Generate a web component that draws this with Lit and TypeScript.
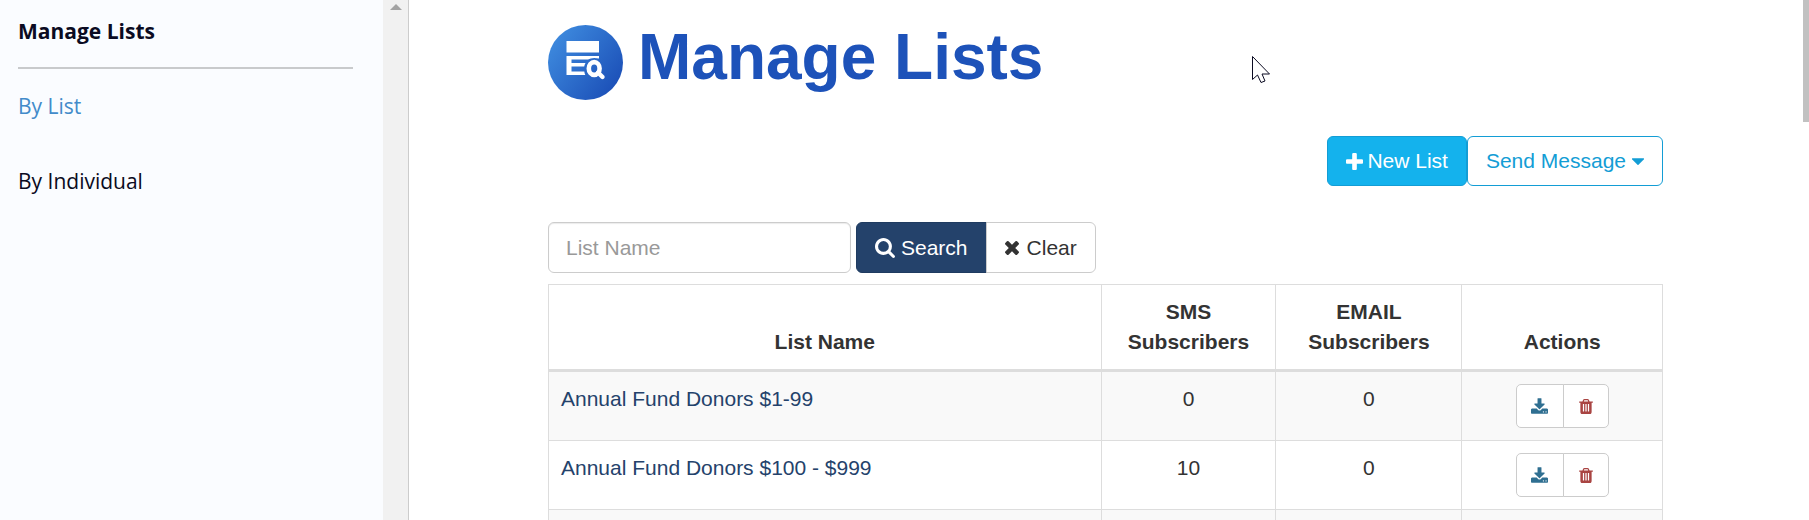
import { LitElement, html, css, svg, nothing } from "lit";
import { customElement, property } from "lit/decorators.js";

interface ListRow {
  name: string;
  sms: number;
  email: number;
}

const ROWS: ListRow[] = [
  { name: "Annual Fund Donors $1-99", sms: 0, email: 0 },
  { name: "Annual Fund Donors $100 - $999", sms: 10, email: 0 },
];

/* Glyphs on a 1792-unit grid with the y axis pointing down. */
const GLYPHS: Record<string, { box: string; d: string }> = {
  plus: {
    box: "0 0 1408 1408",
    d: "M1408 608v192q0 40-28 68t-68 28H896v416q0 40-28 68t-68 28H608q-40 0-68-28t-28-68V896H96q-40 0-68-28T0 800V608q0-40 28-68t68-28h416V96q0-40 28-68t68-28h192q40 0 68 28t28 68v416h416q40 0 68 28t28 68z",
  },
  search: {
    box: "0 0 1664 1664",
    d: "M1152 704q0-185-131.500-316.500T704 256 387.500 387.500 256 704t131.500 316.500T704 1152t316.500-131.500T1152 704zm512 832q0 52-38 90t-90 38q-54 0-90-38l-343-342q-179 124-399 124-143 0-273.500-55.500t-225-150-150-225T0 704t55.500-273.500 150-225 225-150T704 0t273.500 55.500 225 150 150 225T1408 704q0 220-124 399l343 343q37 37 37 90z",
  },
  times: {
    box: "0 0 1188 1188",
    d: "M1188 956q0 40-28 68l-136 136q-28 28-68 28t-68-28L594 866l-294 294q-28 28-68 28t-68-28L28 1024q-28-28-28-68t28-68l294-294L28 300Q0 272 0 232t28-68L164 28q28-28 68-28t68 28l294 294L888 28q28-28 68-28t68 28l136 136q28 28 28 68t-28 68L866 594l294 294q28 28 28 68z",
  },
  caret: {
    box: "0 0 1024 576",
    d: "M1024 64q0 26-19 45L557 557q-19 19-45 19t-45-19L19 109Q0 90 0 64t19-45T64 0h896q26 0 45 19t19 45z",
  },
  download: {
    box: "0 0 1664 1536",
    d: "M1280 1344q0-26-19-45t-45-19-45 19-19 45 19 45 45 19 45-19 19-45zm256 0q0-26-19-45t-45-19-45 19-19 45 19 45 45 19 45-19 19-45zm128-224v320q0 40-28 68t-68 28H96q-40 0-68-28t-28-68v-320q0-40 28-68t68-28h465l135 136q58 56 136 56t136-56l136-136h464q40 0 68 28t28 68zm-325-569q17 41-14 70l-448 448q-18 19-45 19t-45-19L339 621q-31-29-14-70 17-39 59-39h256V64q0-26 19-45t45-19h256q26 0 45 19t19 45v448h256q42 0 59 39z",
  },
  trash: {
    box: "0 0 1408 1536",
    d: "M512 1248V544q0-14-9-23t-23-9h-64q-14 0-23 9t-9 23v704q0 14 9 23t23 9h64q14 0 23-9t9-23zm256 0V544q0-14-9-23t-23-9h-64q-14 0-23 9t-9 23v704q0 14 9 23t23 9h64q14 0 23-9t9-23zm256 0V544q0-14-9-23t-23-9h-64q-14 0-23 9t-9 23v704q0 14 9 23t23 9h64q14 0 23-9t9-23zM480 256h448l-48-117q-7-9-17-11H546q-10 2-17 11zm928 32v64q0 14-9 23t-23 9h-96v948q0 83-47 143.500t-113 60.500H288q-66 0-113-58.500T128 1336V384H32q-14 0-23-9t-9-23v-64q0-14 9-23t23-9h309l70-167q15-37 54-63t79-26h320q40 0 79 26t54 63l70 167h309q14 0 23 9t9 23z",
  },
};

@customElement("glyph-icon")
export class GlyphIcon extends LitElement {
  @property() name = "";

  static styles = css`
    :host { display: inline-block; line-height: 0; }
    .glyph { display: block; width: 100%; height: 100%; fill: currentColor; }
  `;

  render() {
    const g = GLYPHS[this.name];
    if (!g) return nothing;
    return html`<svg class="glyph" viewBox=${g.box} aria-hidden="true">${svg`<path d=${g.d}></path>`}</svg>`;
  }
}

@customElement("app-root")
export class AppRoot extends LitElement {
  static styles = css`
    :host {
      display: flex;
      position: relative;
      height: 100vh;
      overflow: hidden;
      background: #fff;
      color: #333;
      font: 21px/30px "Liberation Sans", Arial, sans-serif;
    }
    *, *::before { box-sizing: border-box; }
    a { text-decoration: none; }

    .sidebar {
      flex: none;
      display: flex;
      width: 409px;
      border-right: 1px solid #ccc;
      background: #fafcff;
      font-family: "Open Sans", sans-serif;
    }
    .side-nav { flex: 1; padding: 16px 30px 0 18px; }
    .side-title {
      margin: 0 0 22px;
      padding-bottom: 21px;
      border-bottom: 2px solid #c8cacc;
      color: #0b0b22;
      font-size: 21px;
      font-weight: 700;
      line-height: 30px;
    }
    .side-list { display: grid; gap: 45px; margin: 0; padding: 0; list-style: none; }
    .side-link { color: #0b0b22; }
    .side-link.active { color: #428bca; }
    .side-scroll { width: 25px; padding-top: 4px; background: #f1f1f1; }
    .side-arrow { display: block; width: 12px; height: 6px; margin: 0 auto; fill: #a3a3a3; }

    .main { flex: 1; min-width: 0; padding: 0 140px 0 139px; }
    .page-title { display: flex; align-items: center; gap: 15px; height: 75px; margin-top: 25px; }
    .badge { flex: none; width: 75px; height: 75px; }
    h1 {
      margin: 0 0 12px;
      color: #1d52b9;
      font-size: 64px;
      line-height: 72px;
      white-space: nowrap;
    }
    .toolbar { display: flex; justify-content: flex-end; margin-top: 36px; }

    .btn {
      display: inline-flex;
      align-items: center;
      justify-content: center;
      gap: 6px;
      height: 50px;
      margin: 0;
      padding: 0 18px;
      border: 1px solid #ccc;
      border-radius: 6px;
      background: #fff;
      color: #333;
      font: inherit;
      white-space: nowrap;
    }
    .btn.info { gap: 4px; border-color: #139dd5; background: #14b2ed; color: #fff; }
    .btn.outline { border-color: #139dd5; color: #139dd5; }
    .icon-plus { width: 17px; height: 17px; }
    .icon-caret { width: 12px; height: 7px; }
    .icon-search { width: 20px; height: 20px; }
    .icon-times { width: 14px; height: 14px; }

    .filter { display: flex; margin: 36px 0 11px; }
    .field {
      width: 303px;
      height: 51px;
      margin: 0 5px 0 0;
      padding: 0 17px;
      border: 1px solid #ccc;
      border-radius: 6px;
      box-shadow: inset 0 1px 1px rgba(0, 0, 0, 0.08);
      color: #555;
      font: inherit;
    }
    .field::placeholder { color: #999; opacity: 1; }
    .filter .btn { height: 51px; }
    .btn.primary {
      border-color: #1f3b60;
      border-radius: 6px 0 0 6px;
      background: #24426b;
      color: #fff;
    }
    .btn.clear { gap: 8px; margin-left: -1px; border-radius: 0 6px 6px 0; }

    table { width: 100%; border-collapse: collapse; table-layout: fixed; }
    th, td { padding: 12px; border: 1px solid #ddd; text-align: center; vertical-align: top; }
    th { vertical-align: bottom; border-bottom: 3px solid #ddd; }
    td { height: 69px; }
    .col-name { width: 49.6%; }
    .col-sms { width: 15.7%; }
    .col-email { width: 16.7%; }
    tbody tr:nth-child(odd) { background: #f9f9f9; }
    .name { text-align: left; }
    .name a { color: #24426b; }
    .actions { padding: 12px 0; }
    .pair { display: flex; justify-content: center; }
    .pair .btn { width: 48px; height: 44px; padding: 0; border-radius: 5px 0 0 5px; color: #2f6f91; }
    .pair .btn + .btn { width: 46px; margin-left: -1px; border-radius: 0 5px 5px 0; color: #a94442; }
    .icon-download { width: 17px; height: 16px; }
    .icon-trash { width: 14px; height: 15px; }

    .page-scroll { flex: none; width: 6px; }
    .page-thumb { height: 122px; background: #c1c1c1; }
    .pointer { position: absolute; top: 56px; left: 1252px; width: 19px; height: 28px; }
  `;

  private row(r: ListRow) {
    return html`<tr>
      <td class="name"><a href="#">${r.name}</a></td>
      <td>${r.sms}</td>
      <td>${r.email}</td>
      <td class="actions">
        <div class="pair">
          <button class="btn" type="button" aria-label="Download"><glyph-icon class="icon-download" name="download"></glyph-icon></button>
          <button class="btn" type="button" aria-label="Delete"><glyph-icon class="icon-trash" name="trash"></glyph-icon></button>
        </div>
      </td>
    </tr>`;
  }

  render() {
    return html`
      <aside class="sidebar">
        <nav class="side-nav">
          <h2 class="side-title">Manage Lists</h2>
          <ul class="side-list">
            <li><a class="side-link active" href="#">By List</a></li>
            <li><a class="side-link" href="#">By Individual</a></li>
          </ul>
        </nav>
        <div class="side-scroll">
          <svg class="side-arrow" viewBox="0 0 12 6" aria-hidden="true"><path d="M0 6L6 0L12 6Z"></path></svg>
        </div>
      </aside>

      <main class="main">
        <header class="page-title">
          <svg class="badge" viewBox="0 0 75 75" aria-hidden="true">
            <defs>
              <linearGradient id="disc" x1="0.1" y1="0.2" x2="0.9" y2="0.8">
                <stop offset="0" stop-color="#3c87dc"></stop>
                <stop offset="1" stop-color="#1d52b9"></stop>
              </linearGradient>
            </defs>
            <circle cx="37.500" cy="37.500" r="37.500" fill="url(#disc)"></circle>
            <g fill="#fff">
              <path d="M18.500 16H51v11.500H18.500Z"></path>
              <path d="M18.500 31H51v2.500Q44 32 40 34.500H23.500v3.500H37.500q-1 1.600-1.300 3.500H23.500V46.500H36.300q.3 2 1 3.500H18.500Z"></path>
            </g>
            <ellipse cx="46.200" cy="43.500" rx="5.400" ry="6.400" fill="none" stroke="#fff" stroke-width="4.600"></ellipse>
            <path d="M50 47.500L54.500 52" stroke="#fff" stroke-width="4.400" stroke-linecap="round"></path>
          </svg>
          <h1>Manage Lists</h1>
        </header>

        <div class="toolbar">
          <button class="btn info" type="button"><glyph-icon class="icon-plus" name="plus"></glyph-icon>New List</button>
          <button class="btn outline" type="button">Send Message<glyph-icon class="icon-caret" name="caret"></glyph-icon></button>
        </div>

        <form class="filter" @submit=${(e: Event) => e.preventDefault()}>
          <input class="field" type="text" placeholder="List Name" aria-label="List Name" />
          <button class="btn primary" type="submit"><glyph-icon class="icon-search" name="search"></glyph-icon>Search</button>
          <button class="btn clear" type="reset"><glyph-icon class="icon-times" name="times"></glyph-icon>Clear</button>
        </form>

        <table>
          <thead>
            <tr>
              <th class="col-name">List Name</th>
              <th class="col-sms">SMS Subscribers</th>
              <th class="col-email">EMAIL Subscribers</th>
              <th>Actions</th>
            </tr>
          </thead>
          <tbody>
            ${ROWS.map((r) => this.row(r))}
            <tr><td></td><td></td><td></td><td></td></tr>
          </tbody>
        </table>
      </main>

      <div class="page-scroll"><div class="page-thumb"></div></div>

      <svg class="pointer" viewBox="0 0 19 28" aria-hidden="true">
        <path d="M.5 .5V23.500L5.500 19L9 26.500L13 25L10 18H17.500Z" fill="#fff" stroke="#0b0b22" stroke-width="1"></path>
      </svg>
    `;
  }
}
